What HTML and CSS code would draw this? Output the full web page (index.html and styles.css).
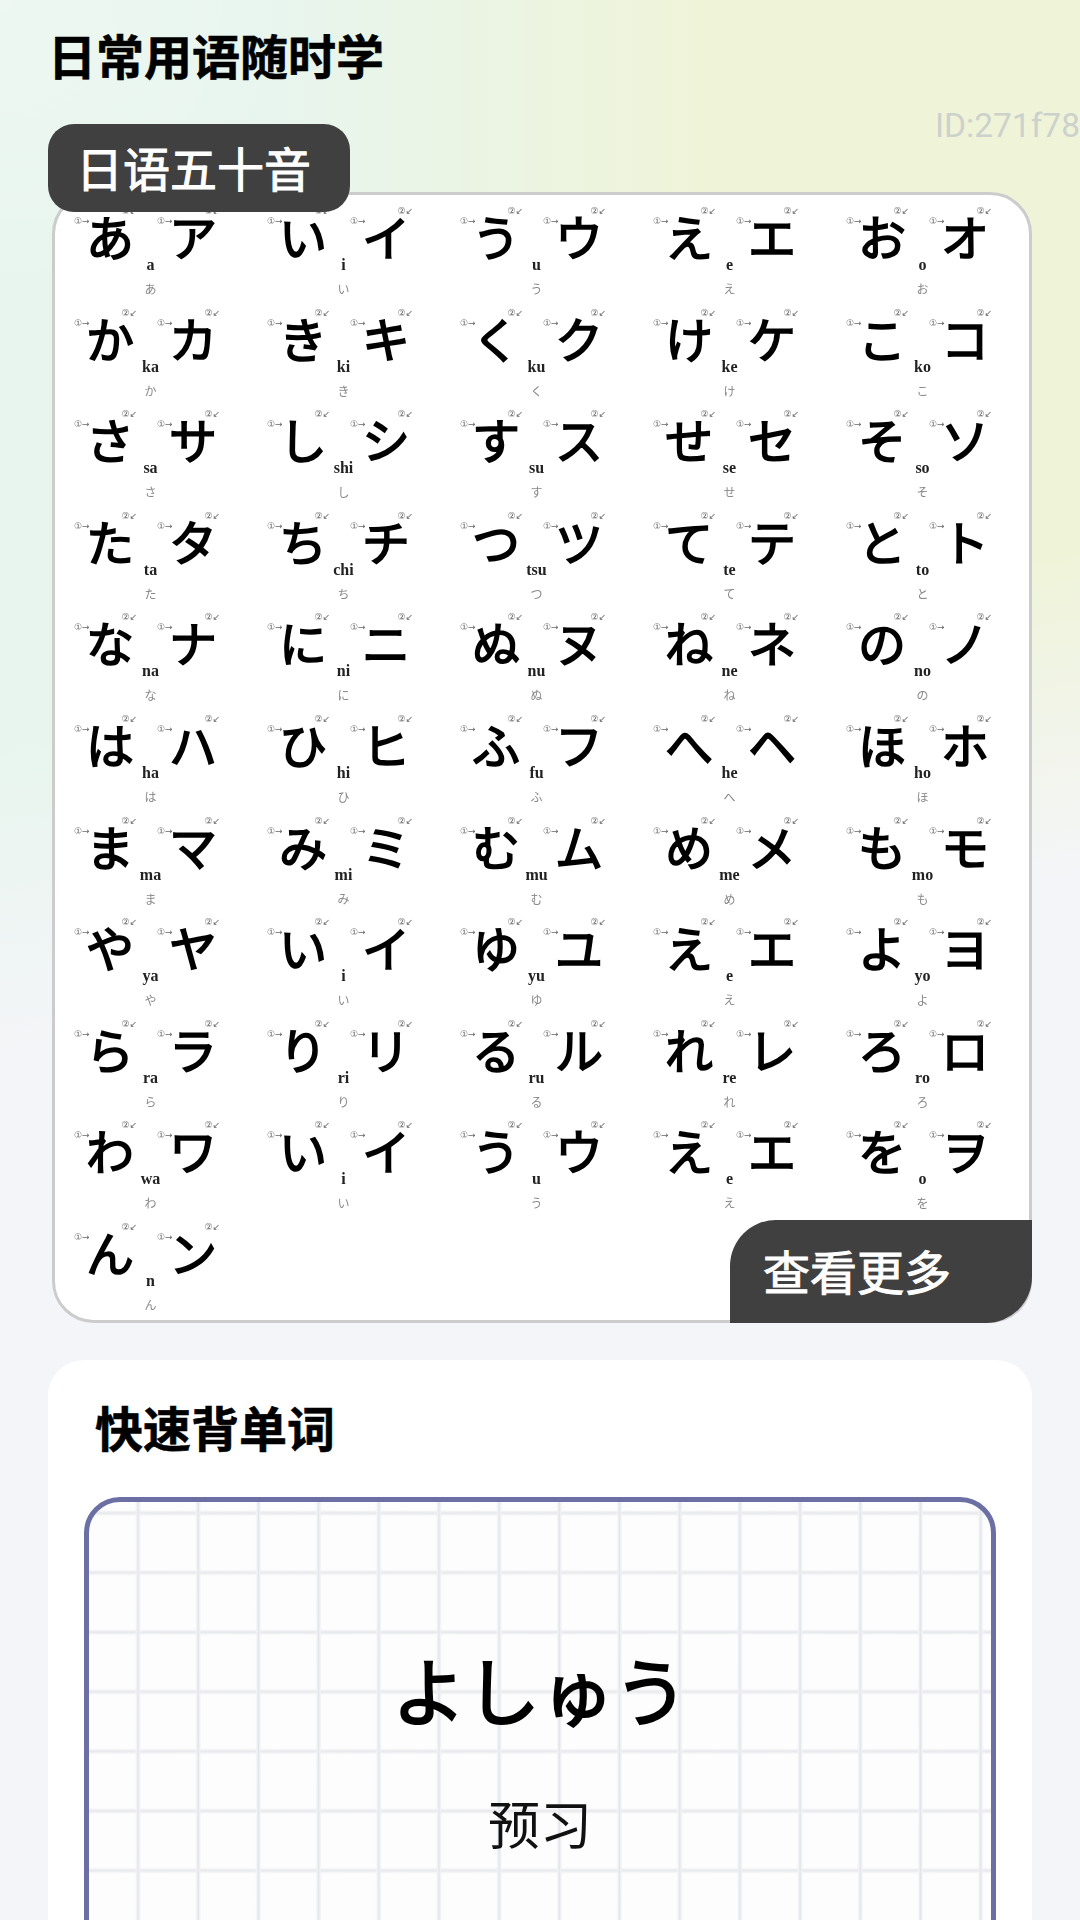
FILE: index.html
```html
<!DOCTYPE html>
<html lang="zh">
<head>
<meta charset="utf-8">
<title>日常用语随时学</title>
<link rel="stylesheet" href="styles.css">
</head>
<body>
<div class="page">
  <h1 class="title">日常用语随时学</h1>
  <div class="tab-row">
    <div class="badge">日语五十音</div>
    <div class="id">ID:271f78</div>
  </div>
  <section class="chart-card">
    <div class="chart" lang="ja">
      <div class="cell"><span class="kana">あ</span><span class="kana">ア</span><b class="ro">a</b><i class="sm">あ</i></div>
      <div class="cell"><span class="kana">い</span><span class="kana">イ</span><b class="ro">i</b><i class="sm">い</i></div>
      <div class="cell"><span class="kana">う</span><span class="kana">ウ</span><b class="ro">u</b><i class="sm">う</i></div>
      <div class="cell"><span class="kana">え</span><span class="kana">エ</span><b class="ro">e</b><i class="sm">え</i></div>
      <div class="cell"><span class="kana">お</span><span class="kana">オ</span><b class="ro">o</b><i class="sm">お</i></div>
      <div class="cell"><span class="kana">か</span><span class="kana">カ</span><b class="ro">ka</b><i class="sm">か</i></div>
      <div class="cell"><span class="kana">き</span><span class="kana">キ</span><b class="ro">ki</b><i class="sm">き</i></div>
      <div class="cell"><span class="kana">く</span><span class="kana">ク</span><b class="ro">ku</b><i class="sm">く</i></div>
      <div class="cell"><span class="kana">け</span><span class="kana">ケ</span><b class="ro">ke</b><i class="sm">け</i></div>
      <div class="cell"><span class="kana">こ</span><span class="kana">コ</span><b class="ro">ko</b><i class="sm">こ</i></div>
      <div class="cell"><span class="kana">さ</span><span class="kana">サ</span><b class="ro">sa</b><i class="sm">さ</i></div>
      <div class="cell"><span class="kana">し</span><span class="kana">シ</span><b class="ro">shi</b><i class="sm">し</i></div>
      <div class="cell"><span class="kana">す</span><span class="kana">ス</span><b class="ro">su</b><i class="sm">す</i></div>
      <div class="cell"><span class="kana">せ</span><span class="kana">セ</span><b class="ro">se</b><i class="sm">せ</i></div>
      <div class="cell"><span class="kana">そ</span><span class="kana">ソ</span><b class="ro">so</b><i class="sm">そ</i></div>
      <div class="cell"><span class="kana">た</span><span class="kana">タ</span><b class="ro">ta</b><i class="sm">た</i></div>
      <div class="cell"><span class="kana">ち</span><span class="kana">チ</span><b class="ro">chi</b><i class="sm">ち</i></div>
      <div class="cell"><span class="kana">つ</span><span class="kana">ツ</span><b class="ro">tsu</b><i class="sm">つ</i></div>
      <div class="cell"><span class="kana">て</span><span class="kana">テ</span><b class="ro">te</b><i class="sm">て</i></div>
      <div class="cell"><span class="kana">と</span><span class="kana">ト</span><b class="ro">to</b><i class="sm">と</i></div>
      <div class="cell"><span class="kana">な</span><span class="kana">ナ</span><b class="ro">na</b><i class="sm">な</i></div>
      <div class="cell"><span class="kana">に</span><span class="kana">ニ</span><b class="ro">ni</b><i class="sm">に</i></div>
      <div class="cell"><span class="kana">ぬ</span><span class="kana">ヌ</span><b class="ro">nu</b><i class="sm">ぬ</i></div>
      <div class="cell"><span class="kana">ね</span><span class="kana">ネ</span><b class="ro">ne</b><i class="sm">ね</i></div>
      <div class="cell"><span class="kana">の</span><span class="kana">ノ</span><b class="ro">no</b><i class="sm">の</i></div>
      <div class="cell"><span class="kana">は</span><span class="kana">ハ</span><b class="ro">ha</b><i class="sm">は</i></div>
      <div class="cell"><span class="kana">ひ</span><span class="kana">ヒ</span><b class="ro">hi</b><i class="sm">ひ</i></div>
      <div class="cell"><span class="kana">ふ</span><span class="kana">フ</span><b class="ro">fu</b><i class="sm">ふ</i></div>
      <div class="cell"><span class="kana">へ</span><span class="kana">ヘ</span><b class="ro">he</b><i class="sm">へ</i></div>
      <div class="cell"><span class="kana">ほ</span><span class="kana">ホ</span><b class="ro">ho</b><i class="sm">ほ</i></div>
      <div class="cell"><span class="kana">ま</span><span class="kana">マ</span><b class="ro">ma</b><i class="sm">ま</i></div>
      <div class="cell"><span class="kana">み</span><span class="kana">ミ</span><b class="ro">mi</b><i class="sm">み</i></div>
      <div class="cell"><span class="kana">む</span><span class="kana">ム</span><b class="ro">mu</b><i class="sm">む</i></div>
      <div class="cell"><span class="kana">め</span><span class="kana">メ</span><b class="ro">me</b><i class="sm">め</i></div>
      <div class="cell"><span class="kana">も</span><span class="kana">モ</span><b class="ro">mo</b><i class="sm">も</i></div>
      <div class="cell"><span class="kana">や</span><span class="kana">ヤ</span><b class="ro">ya</b><i class="sm">や</i></div>
      <div class="cell"><span class="kana">い</span><span class="kana">イ</span><b class="ro">i</b><i class="sm">い</i></div>
      <div class="cell"><span class="kana">ゆ</span><span class="kana">ユ</span><b class="ro">yu</b><i class="sm">ゆ</i></div>
      <div class="cell"><span class="kana">え</span><span class="kana">エ</span><b class="ro">e</b><i class="sm">え</i></div>
      <div class="cell"><span class="kana">よ</span><span class="kana">ヨ</span><b class="ro">yo</b><i class="sm">よ</i></div>
      <div class="cell"><span class="kana">ら</span><span class="kana">ラ</span><b class="ro">ra</b><i class="sm">ら</i></div>
      <div class="cell"><span class="kana">り</span><span class="kana">リ</span><b class="ro">ri</b><i class="sm">り</i></div>
      <div class="cell"><span class="kana">る</span><span class="kana">ル</span><b class="ro">ru</b><i class="sm">る</i></div>
      <div class="cell"><span class="kana">れ</span><span class="kana">レ</span><b class="ro">re</b><i class="sm">れ</i></div>
      <div class="cell"><span class="kana">ろ</span><span class="kana">ロ</span><b class="ro">ro</b><i class="sm">ろ</i></div>
      <div class="cell"><span class="kana">わ</span><span class="kana">ワ</span><b class="ro">wa</b><i class="sm">わ</i></div>
      <div class="cell"><span class="kana">い</span><span class="kana">イ</span><b class="ro">i</b><i class="sm">い</i></div>
      <div class="cell"><span class="kana">う</span><span class="kana">ウ</span><b class="ro">u</b><i class="sm">う</i></div>
      <div class="cell"><span class="kana">え</span><span class="kana">エ</span><b class="ro">e</b><i class="sm">え</i></div>
      <div class="cell"><span class="kana">を</span><span class="kana">ヲ</span><b class="ro">o</b><i class="sm">を</i></div>
      <div class="cell"><span class="kana">ん</span><span class="kana">ン</span><b class="ro">n</b><i class="sm">ん</i></div>
    </div>
    <div class="more">查看更多</div>
  </section>
  <section class="vocab-card">
    <h2 class="heading">快速背单词</h2>
    <div class="word-box">
      <div class="word" lang="ja">よしゅう</div>
      <div class="meaning">预习</div>
    </div>
  </section>
</div>
</body>
</html>
```
FILE: styles.css
```css
* { box-sizing: border-box; }
html, body { margin: 0; padding: 0; }
body {
  background: #f4f5f8;
  font-family: "Noto Sans CJK SC", "Noto Sans", sans-serif;
}
.page {
  width: 1080px;
  height: 1920px;
  overflow: hidden;
  padding-top: 26px;
  background-color: #f4f5f8;
  background-image:
    radial-gradient(circle at 0 0, rgba(255,255,255,.25) 0, rgba(255,255,255,0) 300px),
    linear-gradient(170deg, rgba(244,245,248,0) 730px, #f4f5f8 1050px),
    linear-gradient(90deg, #e8f5ee 0, #e8f5ee 25%, #eff4d9 65%, #eff4d9 100%);
}
.title {
  margin: 0 0 0 48px;
  font-size: 48px;
  line-height: 56px;
  font-weight: 700;
  -webkit-text-stroke: 0.6px #000;
  color: #000;
}
.tab-row {
  display: flex;
  justify-content: space-between;
  align-items: flex-start;
  margin: 42px 0 -20px 48px;
  position: relative;
  z-index: 1;
}
.badge {
  width: 302px;
  height: 88px;
  padding-left: 28px;
  border-radius: 26px;
  background: #404040;
  color: #fff;
  font-size: 47px;
  font-weight: 400;
  -webkit-text-stroke: 1px #fff;
  line-height: 86px;
}
.id {
  margin-top: -13px;
  font-family: Roboto, sans-serif;
  font-size: 33.5px;
  line-height: 30px;
  color: #cdd1cc;
  white-space: nowrap;
}
.chart-card {
  position: relative;
  height: 1131px;
  margin: 0 48px 0 52px;
  padding-top: 15px;
  background: #fff;
  border: 3px solid #cccccc;
  border-radius: 42px;
}
.chart {
  display: grid;
  grid-template-columns: repeat(5, 133px);
  grid-auto-rows: 101.6px;
  column-gap: 60px;
  padding-left: 30px;
  filter: blur(0.7px);
}
.cell {
  display: grid;
  grid-template-columns: 50px 50px;
  column-gap: 33px;
  justify-items: center;
  align-content: start;
}
.kana {
  position: relative;
  height: 50px;
  font-family: "Noto Sans CJK JP", sans-serif;
  font-size: 48px;
  line-height: 50px;
  font-weight: 400;
  -webkit-text-stroke: 1.6px #000;
  color: #000;
}
.kana::before,
.kana::after {
  position: absolute;
  font-family: "DejaVu Sans", sans-serif;
  font-size: 9px;
  line-height: 10px;
  font-weight: 400;
  -webkit-text-stroke: 0;
  color: #666;
  white-space: nowrap;
}
.kana::before { content: "①→"; left: -12px; top: 6px; }
.kana::after { content: "②↙"; right: -3px; top: -4px; }
.ro {
  grid-column: 1 / 3;
  margin-top: -3px;
  margin-right: 2px;
  font-family: "Liberation Serif", serif;
  font-size: 16px;
  line-height: 16px;
  font-weight: 700;
  color: #222;
}
.sm {
  grid-column: 1 / 3;
  margin-top: 9px;
  margin-right: 2px;
  font-family: "Noto Sans CJK JP", sans-serif;
  font-size: 12px;
  line-height: 14px;
  font-style: normal;
  color: #888;
}
.more {
  position: absolute;
  right: -3px;
  bottom: -3px;
  width: 302px;
  height: 103px;
  padding-left: 33px;
  border-radius: 46px 0 46px 0;
  background: #404040;
  color: #fff;
  font-size: 47px;
  font-weight: 400;
  -webkit-text-stroke: 1px #fff;
  line-height: 99px;
}
.vocab-card {
  margin: 37px 48px 0;
  height: 700px;
  padding: 38px 36px 0;
  background: #fff;
  border-radius: 36px;
}
.heading {
  margin: 0 0 43px 11px;
  font-size: 48px;
  line-height: 56px;
  font-weight: 700;
  -webkit-text-stroke: 0.6px #000;
  color: #000;
}
.word-box {
  height: 600px;
  padding-top: 136px;
  text-align: center;
  border: 5px solid #6b6fa3;
  border-radius: 36px;
  background-color: #fdfdfe;
  background-image:
    linear-gradient(90deg, transparent 27px, #f2f3f6 28.5px, #e2e4ea 30px, #f2f3f6 31.5px, transparent 33px),
    linear-gradient(180deg, transparent 27px, #f2f2f4 28.5px, #e6e7ea 30px, #f2f2f4 31.5px, transparent 33px);
  background-size: 60.2px 59.6px;
  background-position: 19px -19px;
}
.word {
  font-family: "Noto Sans CJK JP", sans-serif;
  font-size: 74px;
  line-height: 100px;
  font-weight: 400;
  -webkit-text-stroke: 2px #000;
  color: #000;
}
.meaning {
  margin-top: 55px;
  font-size: 52px;
  line-height: 60px;
  font-weight: 400;
  color: #111;
}
```
